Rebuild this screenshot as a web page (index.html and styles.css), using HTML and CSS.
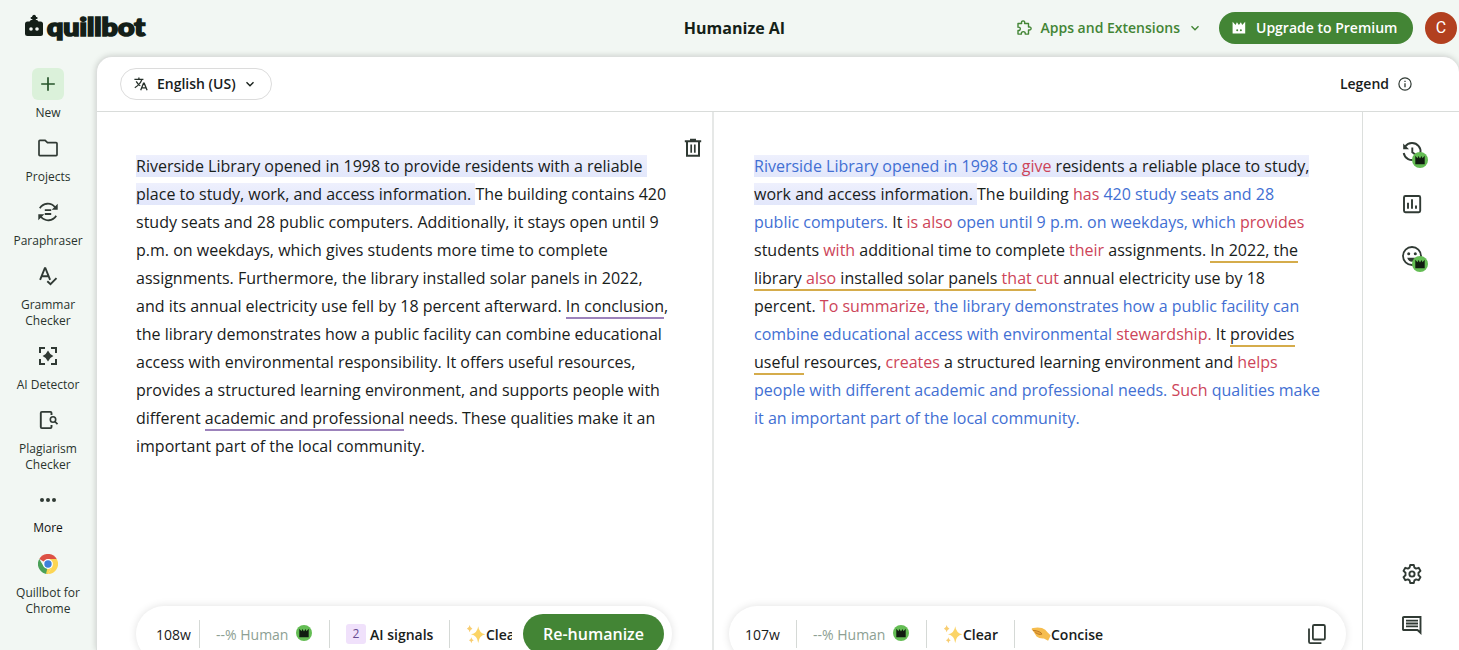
FILE: index.html
```html
<!DOCTYPE html>
<html lang="en">
<head>
<meta charset="utf-8">
<title>Humanize AI</title>
<link rel="stylesheet" href="styles.css">
</head>
<body>
<svg class="defs" width="0" height="0">
  <symbol id="crown" viewBox="0 0 16 16"><circle cx="8" cy="8" r="8" fill="#64bd54"/><path d="M3.300 3.800L5.500 6.200 6.400 4 8 6.400 9.600 4l.9 2.200 2.200-2.400v8.400H3.300z" fill="#101c10"/></symbol>
  <symbol id="sparkles" viewBox="0 0 18 18"><path d="M11 2q.8 6.300 6.500 7.300Q11.800 10.300 11 17q-.8-6.700-6.500-7.700Q10.200 8.300 11 2z" fill="#fbd467"/><path d="M3.300 1q.4 2.700 2.500 3.200-2.100.5-2.500 3.200Q2.900 4.700.8 4.200 2.900 3.700 3.300 1zM4.800 12q.3 2.200 2.200 2.700-1.900.5-2.200 2.700-.3-2.200-2.200-2.700 1.900-.5 2.200-2.700z" fill="#f8cd70"/></symbol>
  <symbol id="chev" viewBox="0 0 10 10"><path d="M1.500 3.200L5 6.700l3.500-3.500" fill="none" stroke="currentColor" stroke-width="1.400"/></symbol>
</svg>

<header class="header">
  <svg class="logo" viewBox="0 0 124 30" width="124" height="30">
    <g fill="#141f18">
      <rect x="1" y="8.500" width="18" height="14.500" rx="2.500"/>
      <rect x="8.400" y="3" width="3.400" height="7"/>
      <rect x="6.600" y="4" width="7" height="1.900" rx=".9"/>
      <circle cx="10.100" cy="3.600" r="1.800"/>
      <path d="M5.500 9q.5-2.200 2.800-2.200h3.400Q14 6.800 14.500 9z"/>
      <text class="logo-text" x="23" y="22.500" textLength="98" lengthAdjust="spacingAndGlyphs">quillbot</text>
    </g>
    <circle cx="7" cy="16" r="1.800" fill="#f2f7f3"/><circle cx="13" cy="16" r="1.800" fill="#f2f7f3"/>
  </svg>
  <h1 class="title">Humanize AI</h1>
  <div class="header-right">
    <button class="apps">
      <svg width="16" height="16" viewBox="0 0 16 16"><path d="M2 3.500h3.600c-.5-1.900.4-2.600 1.500-2.600s2 .7 1.500 2.600h3.900v3.600c1.800-.5 2.600.4 2.600 1.400s-.8 1.900-2.600 1.400v4.200H9.200c.3-1.600-.6-2.500-1.900-2.500S5.100 12.500 5.400 14.100H2v-3.600c1.700.2 2.300-.6 2.300-1.700S3.600 7 2 7.200z" fill="none" stroke="currentColor" stroke-width="1.400" stroke-linejoin="round"/></svg>
      <span>Apps and Extensions</span>
      <svg class="chev" width="10" height="10"><use href="#chev"/></svg>
    </button>
    <button class="upgrade">
      <svg width="14" height="14" viewBox="0 0 14 14"><path d="M.6.800L3.600 4 4.900 1.200 6.900 4l2-2.800L10.200 4l3-3.200v11.700H.6z" fill="#fff"/><circle cx="5.200" cy="9.200" r="1" fill="#438535"/><circle cx="8.900" cy="9.200" r="1" fill="#438535"/></svg>
      <span>Upgrade to Premium</span>
    </button>
    <div class="avatar">C</div>
  </div>
</header>

<div class="body">
  <nav class="sidebar">
    <a class="nav"><i class="tile new"><svg width="24" height="24" viewBox="0 0 24 24"><path d="M12 5.200v13.600M5.200 12h13.600" stroke="#26542a" stroke-width="1.700"/></svg></i><span>New</span></a>
    <a class="nav"><i class="tile"><svg width="24" height="24" viewBox="0 0 24 24"><path d="M3 18.800V5.200q0-.9.900-.9h5.200l2.400 2.400h8.600q.9 0 .9.900v11.200q0 .8-.9.800H3.900q-.9 0-.9-.8z" fill="none" stroke="#303a34" stroke-width="1.700"/></svg></i><span>Projects</span></a>
    <a class="nav"><i class="tile"><svg width="24" height="24" viewBox="0 0 24 24"><path d="M3.800 8.200A9.300 9.300 0 0 1 19 7.200M20.200 15.800A9.300 9.300 0 0 1 5 16.800M8.800 10.200h6.400M8.800 14h6.400" fill="none" stroke="#303a34" stroke-width="1.800"/><path d="M21.700 3.800v6h-6zM2.300 20.200v-6h6z" fill="#303a34"/></svg></i><span>Paraphraser</span></a>
    <a class="nav"><i class="tile"><svg width="24" height="24" viewBox="0 0 24 24"><path d="M4.100 15.800L8.800 4.200h.6l4.700 11.600M5.800 12.200h6.500M11.300 17.200l3.200 3 6-6" fill="none" stroke="#303a34" stroke-width="1.900"/></svg></i><span>Grammar<br>Checker</span></a>
    <a class="nav"><i class="tile"><svg width="24" height="24" viewBox="0 0 24 24"><path d="M4 9V4h5M15 4h5v5M20 15v5h-5M9 20H4v-5" fill="none" stroke="#303a34" stroke-width="2"/><path d="M12 6.600q1.600 3.800 5.400 5.400-3.800 1.600-5.400 5.400Q10.400 13.600 6.600 12 10.400 10.400 12 6.600z" fill="#303a34"/></svg></i><span>AI Detector</span></a>
    <a class="nav"><i class="tile"><svg width="24" height="24" viewBox="0 0 24 24"><path d="M15.500 7V5q0-1.100-1.100-1.100H5.900q-1.100 0-1.100 1.100v13.900q0 1.200 1.100 1.200h8.500q1.100 0 1.100-1.200V17" fill="none" stroke="#303a34" stroke-width="1.900"/><circle cx="17" cy="11.500" r="2.700" fill="none" stroke="#303a34" stroke-width="1.600"/><path d="M18.800 13.500l2.700 2.700" stroke="#303a34" stroke-width="1.700"/></svg></i><span>Plagiarism<br>Checker</span></a>
    <a class="nav nav-more"><i class="tile"><svg width="24" height="24" viewBox="0 0 24 24" fill="#303a34"><circle cx="6" cy="12" r="2"/><circle cx="12" cy="12" r="2"/><circle cx="18" cy="12" r="2"/></svg></i><span class="more">More</span></a>
    <a class="nav"><i class="tile"><svg width="20" height="20" viewBox="0 0 20 20"><path d="M10 10L1.300 5A10 10 0 0 1 18.700 5z" fill="#dd5144"/><path d="M10 5h8.700A10 10 0 0 1 10 20l4.300-7.500z" fill="#fcd553"/><path d="M1.300 5l4.400 7.500L10 14.500 10 20A10 10 0 0 1 1.300 5z" fill="#4aa158"/><path d="M10 20l4.300-7.500-5 2-1.300 5.300z" fill="#fcd553"/><circle cx="10" cy="10" r="4.900" fill="#fff"/><circle cx="10" cy="10" r="3.700" fill="#3e80da"/></svg></i><span>Quillbot for<br>Chrome</span></a>
  </nav>

  <main class="panel">
    <div class="toolbar">
      <button class="lang">
        <svg width="14" height="14" viewBox="0 0 14 14" fill="none" stroke="#26302a" stroke-width="1.300"><path d="M.4 2.400h9M4.900.5v1.900M7.900 2.400Q6.500 7.200.8 10.700M2.200 4.400Q4 7.600 6.300 8.700M6.700 13.200l2.800-7h.7l2.900 7M7.800 10.900h4.100"/></svg>
        <span>English (US)</span>
        <svg width="10" height="10"><use href="#chev"/></svg>
      </button>
      <div class="legend"><span>Legend</span><svg width="14" height="14" viewBox="0 0 14 14"><circle cx="7" cy="7" r="6.100" fill="none" stroke="#303a34" stroke-width="1.200"/><path d="M7 6.200v4M7 3.700v1.400" stroke="#303a34" stroke-width="1.300"/></svg></div>
    </div>
    <div class="columns">
      <section class="col source">
        <svg class="trash" width="18" height="20" viewBox="0 0 18 20" fill="none" stroke="#303a34" stroke-width="2"><path d="M.8 3.200h16.400M6 1.700h6M3 3.500v14.300h12V3.500"/><path d="M7.200 6.500v8.200M10.800 6.500v8.200" stroke-width="1.700"/></svg>
        <p class="text"><span class="hl">Riverside Library opened in 1998 to provide residents with a reliable&nbsp;</span><br><span class="hl">place to study, work, and access information. </span>The building contains 420<br>study seats and 28 public computers. Additionally, it stays open until 9<br>p.m. on weekdays, which gives students more time to complete<br>assignments. Furthermore, the library installed solar panels in 2022,<br>and its annual electricity use fell by 18 percent afterward. <span class="sig">In conclusion</span>,<br>the library demonstrates how a public facility can combine educational<br>access with environmental responsibility. It offers useful resources,<br>provides a structured learning environment, and supports people with<br>different <span class="sig">academic and professional</span> needs. These qualities make it an<br>important part of the local community.</p>
        <div class="bar bar-left">
          <span class="count">108w</span>
          <span class="human">--% Human <svg width="16" height="16"><use href="#crown"/></svg></span>
          <span class="signals"><b class="badge">2</b>AI signals</span>
          <span class="tone clip"><svg width="20" height="20"><use href="#sparkles"/></svg>Clear</span>
          <button class="rehumanize">Re-humanize</button>
        </div>
      </section>
      <section class="col result">
        <p class="text"><span class="hl"><span class="b">Riverside Library opened in 1998 to</span> <span class="r">give</span> residents a reliable place to study,</span><br><span class="hl">work and access information. </span>The building <span class="r">has</span> <span class="b">420 study seats and 28</span><br><span class="b">public computers.</span> It <span class="r">is also</span> <span class="b">open until 9 p.m. on weekdays, which</span> <span class="r">provides</span><br>students <span class="r">with</span> additional time to complete <span class="r">their</span> assignments. <span class="st">In 2022, the</span><br><span class="st">library <span class="r">also</span> installed solar panels <span class="r">that </span></span><span class="r">cut</span> annual electricity use by 18<br>percent. <span class="r">To summarize,</span> <span class="b">the library demonstrates how a public facility can</span><br><span class="b">combine educational access with environmental</span> <span class="r">stewardship.</span> It <span class="st">provides</span><br><span class="st">useful </span>resources, <span class="r">creates</span> a structured learning environment and <span class="r">helps</span><br><span class="b">people with different academic and professional needs.</span> <span class="r">Such</span> <span class="b">qualities make</span><br><span class="b">it an important part of the local community.</span></p>
        <div class="bar bar-right">
          <span class="count">107w</span>
          <span class="human">--% Human <svg width="16" height="16"><use href="#crown"/></svg></span>
          <span class="tone"><svg width="20" height="20"><use href="#sparkles"/></svg>Clear</span>
          <span class="tone last"><svg width="20" height="20" viewBox="0 0 20 20"><path d="M.6 5q.2-1 1.600-1 4.800-.9 8.800.1 3.600 1.400 5.700 4.300l3 3.200-2.600 5.200-4.200-2.300q-4.600.4-7.300-2.100L3.200 8.700 1.800 6.600Q.6 5.900.6 5z" fill="#f6bd4e"/><path d="M1.800 6.400q3.800.1 6.400 1.300 2.400 1 2.700 2.400-1.800.8-4-.1L4.200 8.600" fill="#e9a33a" stroke="#b87521" stroke-width=".9"/></svg>Concise</span>
          <svg class="copy" width="20" height="22" viewBox="0 0 20 22" fill="none" stroke="#303a34" stroke-width="1.800"><rect x="5.900" y="2" width="12" height="14.500" rx="1.300"/><path d="M2 5.500v13.200q0 1.400 1.400 1.400h11"/></svg>
        </div>
      </section>
      <aside class="rail">
        <div class="tool"><svg width="24" height="24" viewBox="0 0 24 24" fill="none" stroke="#303a34" stroke-width="1.900"><path d="M5.200 6.500A8.500 8.500 0 1 1 3.700 13M12.300 7.500v4.800l4 3"/><path d="M3.200 3.500v5.800H9z" fill="#303a34" stroke="none"/></svg><svg class="pro" width="16" height="16"><use href="#crown"/></svg></div>
        <div class="tool"><svg width="24" height="24" viewBox="0 0 24 24" fill="none" stroke="#303a34" stroke-width="1.900"><rect x="4" y="4" width="16.200" height="16.200" rx="1.400"/><path d="M8 10.700v6M12 7.300v9.400M16 13.500v3.200"/></svg></div>
        <div class="tool"><svg width="24" height="24" viewBox="0 0 24 24"><circle cx="12" cy="12" r="9" fill="none" stroke="#303a34" stroke-width="1.800"/><circle cx="8.700" cy="9.700" r="1.500" fill="#303a34"/><circle cx="15.300" cy="9.700" r="1.500" fill="#303a34"/><path d="M7.200 13.800h9.600q-1.300 3.900-4.800 3.900t-4.800-3.900z" fill="#303a34"/></svg><svg class="pro" width="16" height="16"><use href="#crown"/></svg></div>
        <div class="tool settings"><svg width="24" height="24" viewBox="0 0 24 24" fill="none" stroke="#303a34" stroke-width="1.900" stroke-linejoin="round"><path d="M10.200 3h3.600l.6 2.600 1.700 1 2.600-.8 1.800 3.100-2 1.900v2.400l2 1.900-1.800 3.100-2.600-.8-1.700 1-.6 2.600h-3.600l-.6-2.600-1.700-1-2.600.8-1.800-3.100 2-1.900v-2.400l-2-1.900 1.800-3.100 2.600.8 1.700-1z"/><circle cx="12" cy="12" r="2.600"/></svg></div>
        <div class="tool feedback"><svg width="24" height="24" viewBox="0 0 24 24" fill="none" stroke="#303a34" stroke-width="1.900"><path d="M3.300 4h17.200v15.800l-3-2.800H3.300q-.3 0-.3-.5V4.500q0-.5.500-.5zM6 7.600h12M6 10.500h12M6 13.400h12"/></svg></div>
      </aside>
    </div>
  </main>
</div>
</body>
</html>
```
FILE: styles.css
```css
* { box-sizing: border-box; }
body { margin: 0; width: 1459px; height: 650px; overflow: hidden; background: #f2f7f3; color: #18201b; font-family: "Open Sans", "Noto Sans", sans-serif; display: flex; flex-direction: column; }
button { font: inherit; color: inherit; border: 0; background: none; padding: 0; margin: 0; display: flex; align-items: center; white-space: nowrap; }
svg { display: block; flex: none; }
.defs { position: absolute; }

.header { height: 56px; flex: none; display: grid; grid-template-columns: 1fr auto 1fr; align-items: center; padding: 0 2px 0 24px; }
.logo { overflow: visible; }
.logo-text { font: 900 24px Lato, sans-serif; stroke: #141f18; stroke-width: 1.700px; }
.title { margin: 0 12px 0 0; font-size: 16px; line-height: 24px; font-weight: 700; color: #141f18; }
.header-right { display: flex; justify-content: flex-end; align-items: center; }
.apps { color: #438535; font-size: 14px; font-weight: 600; gap: 8px; margin-right: 19px; }
.apps span, .upgrade span { padding-bottom: 1px; }
.apps .chev { margin-left: 2px; }
.upgrade { width: 194px; height: 32px; border-radius: 16px; background: #438535; color: #fff; font-size: 14px; font-weight: 600; padding-left: 13px; gap: 10px; margin-right: 12px; }
.avatar { width: 32px; height: 32px; border-radius: 50%; background: #b2401f; color: #fff; font: 16px/32px Roboto, sans-serif; text-align: center; }

.body { flex: 1; min-height: 0; display: flex; }
.sidebar { width: 96px; flex: none; padding-top: 12px; display: flex; flex-direction: column; gap: 11px; }
.nav { display: flex; flex-direction: column; align-items: center; gap: 5px; font-size: 12px; line-height: 16px; text-align: center; color: #29332d; }
.nav-more { gap: 4px; padding-bottom: 1px; }
.tile { width: 32px; height: 32px; border-radius: 6px; display: grid; place-items: center; }
.new { background: #dbf1da; }
.more { font-weight: 500; color: #111; }

.panel { flex: 1; min-width: 0; background: #fff; border: 1px solid #dcdfdd; border-bottom: 0; border-right: 0; border-radius: 16px 16px 0 0; box-shadow: 0 0 6px rgba(0,0,0,.18); display: flex; flex-direction: column; }
.toolbar { height: 55px; flex: none; border-bottom: 1px solid #d9dcda; display: flex; align-items: center; justify-content: space-between; padding: 0 47px 1px 23px; font-size: 14px; font-weight: 600; }
.lang { height: 32px; width: 152px; border: 1px solid #dcdcdc; border-radius: 16px; padding-left: 13px; gap: 9px; }
.legend { display: flex; align-items: center; gap: 9px; }
.columns { flex: 1; min-height: 0; display: flex; }
.col { position: relative; padding-top: 40px; }
.source { width: 617px; border-right: 2px solid #e6e8e7; padding-left: 39px; }
.result { width: 649px; border-right: 1px solid #dcdfdd; padding-left: 40px; }
.text { margin: 0; font-size: 16px; line-height: 28px; white-space: nowrap; }
.hl { background: linear-gradient(#eef0fd, #e2e7fb); }
.sig { border-bottom: 2px solid #9c82bb; }
.st { border-bottom: 2px solid #d5ac4b; }
.b { color: #426fd3; }
.r { color: #cd4459; }
.trash { position: absolute; top: 26px; right: 10px; }

.bar { position: absolute; top: 494px; height: 56px; border-radius: 28px; background: #fff; box-shadow: 0 0 8px rgba(0,0,0,.12); display: flex; align-items: center; font-size: 14px; }
.bar-left { left: 39px; width: 536px; padding-left: 20px; }
.bar-right { left: 15px; width: 617px; padding-left: 16px; }
.bar > span { height: 28px; display: flex; align-items: center; white-space: nowrap; }
.count { width: 44px; border-right: 1px solid #d5d9d6; }
.bar-right .count { width: 52px; }
.human { width: 130px; padding-left: 16px; gap: 8px; color: #8d9f93; border-right: 1px solid #d5d9d6; }
.human svg { margin-bottom: 2px; }
.signals { width: 120px; padding-left: 16px; font-weight: 600; gap: 4px; border-right: 1px solid #d5d9d6; }
.badge { width: 20px; height: 20px; border-radius: 3px; background: #f0e1fb; color: #674b91; font-weight: 400; font-size: 12px; line-height: 20px; text-align: center; }
.tone { width: 88px; padding-left: 16px; font-weight: 600; border-right: 1px solid #d5d9d6; }
.clip { width: 62px; overflow: hidden; border: 0; }
.last { border: 0; }
.rehumanize { width: 141px; height: 40px; border-radius: 20px; background: #438535; color: #fff; font-size: 16px; font-weight: 600; justify-content: center; margin-left: 11px; }
.copy { position: absolute; left: 578px; top: 17px; }

.rail { flex: 1; padding: 28px 0 0 37px; display: flex; flex-direction: column; gap: 28px; }
.tool { position: relative; width: 24px; height: 24px; }
.pro { position: absolute; left: 12px; top: 12px; }
.settings { margin-top: 266px; }
.feedback { margin-top: -1px; }
```
